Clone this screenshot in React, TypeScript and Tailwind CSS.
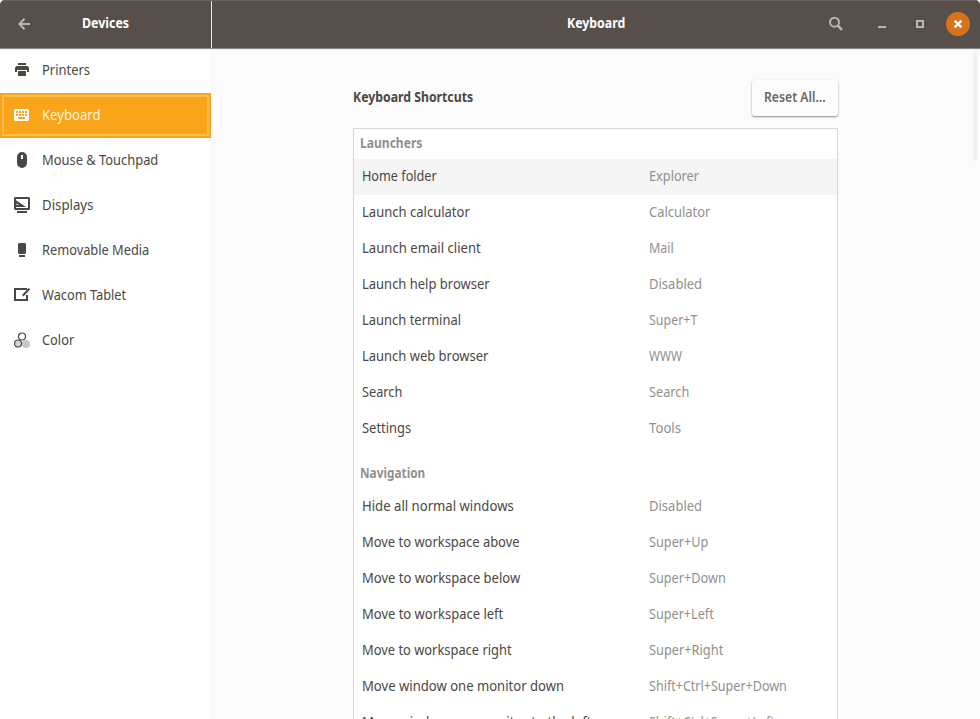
import { useLayoutEffect, useRef, useState, type ReactNode } from "react";

/** Inline label condensed horizontally so that it occupies the given advance width. */
function Label({ children, width, className = "" }: { children: ReactNode; width: number; className?: string }) {
  const ref = useRef<HTMLSpanElement>(null);
  const [scale, setScale] = useState(1);
  useLayoutEffect(() => {
    if (ref.current) setScale(width / ref.current.offsetWidth);
  }, [width]);
  return (
    <span className={`block shrink-0 whitespace-nowrap ${className}`} style={{ width }}>
      <span ref={ref} className="inline-block origin-left" style={{ transform: `scaleX(${scale})` }}>
        {children}
      </span>
    </span>
  );
}

const PrinterIcon = () => (
  <svg width="16" height="16" viewBox="0 0 16 16" fill="currentColor">
    <path d="M4 1h8v2H4zM2.500 4h11L15 5.500V10h-2V8H3v2H1V5.500zM4 9h8v5H4z" />
  </svg>
);
const KeyboardIcon = () => (
  <svg width="16" height="16" viewBox="0 0 16 16" fill="currentColor">
    <path fillRule="evenodd" d="M1 2h13l1 1v10l-1 1H1l-1-1V3zM2 4v2h2V4zM5 4v2h2V4zM8 4v2h2V4zM11 4v2h2V4zM2 7v2h2V7zM5 7v2h2V7zM8 7v2h2V7zM11 7v2h2V7zM4 10v2h7v-2z" />
  </svg>
);
const MouseIcon = () => (
  <svg width="16" height="16" viewBox="0 0 16 16" fill="currentColor">
    <path fillRule="evenodd" d="M8 0a5 5 0 0 1 5 5v6a5 5 0 0 1-10 0V5a5 5 0 0 1 5-5zM7 3v4h2V3z" />
  </svg>
);
const DisplayIcon = () => (
  <svg width="16" height="16" viewBox="0 0 16 16" fill="currentColor">
    <path d="M0 1l1-1h14l1 1v11l-1 1H1l-1-1v-2h2v1h12V2H2v1.200L12 10H0z" />
    <path d="M2.500 6.500v1.500H5z" fill="#fff" />
    <path d="M3 14h10v2H3z" />
  </svg>
);
const MediaIcon = () => (
  <svg width="16" height="16" viewBox="0 0 16 16" fill="currentColor">
    <path d="M5 1h6l1 1v9l-1 1H5l-1-1V2zM5 13h6v2H5z" />
  </svg>
);
const TabletIcon = () => (
  <svg width="16" height="16" viewBox="0 0 16 16" fill="none" stroke="currentColor" strokeWidth="2">
    <path d="M13 8v5H1V2h12" />
    <path d="M15.300 1.700L8.800 8.800" />
  </svg>
);
const ColorIcon = () => (
  <svg width="16" height="16" viewBox="0 0 16 16">
    <circle cx="12" cy="12" r="4" fill="#c8c7c5" />
    <circle cx="8" cy="4.500" r="3.500" fill="#fff" stroke="#4b4743" strokeWidth="1.200" />
    <circle cx="4" cy="11.500" r="3.500" fill="#d3d2d1" stroke="#4b4743" strokeWidth="1.200" />
  </svg>
);

const devices = [
  { name: "Printers", w: 48, Icon: PrinterIcon },
  { name: "Keyboard", w: 58, Icon: KeyboardIcon },
  { name: "Mouse & Touchpad", w: 116, Icon: MouseIcon },
  { name: "Displays", w: 51, Icon: DisplayIcon },
  { name: "Removable Media", w: 107, Icon: MediaIcon },
  { name: "Wacom Tablet", w: 84, Icon: TabletIcon },
  { name: "Color", w: 32, Icon: ColorIcon },
];

type Row = [string, number, string, number];
const launchers: Row[] = [
  ["Home folder", 75, "Explorer", 50],
  ["Launch calculator", 108, "Calculator", 61],
  ["Launch email client", 119, "Mail", 25],
  ["Launch help browser", 128, "Disabled", 53],
  ["Launch terminal", 99, "Super+T", 48],
  ["Launch web browser", 126, "WWW", 33],
  ["Search", 40, "Search", 40],
  ["Settings", 49, "Tools", 32],
];
const navigation: Row[] = [
  ["Hide all normal windows", 152, "Disabled", 53],
  ["Move to workspace above", 158, "Super+Up", 59],
  ["Move to workspace below", 158, "Super+Down", 77],
  ["Move to workspace left", 141, "Super+Left", 65],
  ["Move to workspace right", 150, "Super+Right", 74],
  ["Move window one monitor down", 202, "Shift+Ctrl+Super+Down", 138],
  ["Move window one monitor to the left", 229, "Shift+Ctrl+Super+Left", 126],
];

function Section({ title, width, rows, selected }: { title: string; width: number; rows: Row[]; selected?: number }) {
  return (
    <section>
      <h3 className="flex h-[30px] items-center pb-[2px] pl-[6px] font-bold text-[#92908e]">
        <Label width={width}>{title}</Label>
      </h3>
      {rows.map(([name, nw, key, kw], i) => (
        <div key={name} className={`flex h-9 items-center pl-2 pb-[3px] ${i === selected ? "bg-[#f5f5f5]" : ""}`}>
          <div className="w-[287px]">
            <Label width={nw}>{name}</Label>
          </div>
          <Label width={kw} className="text-[#92908e]">{key}</Label>
        </div>
      ))}
    </section>
  );
}

export default function App() {
  return (
    <div className="h-[719px] w-[980px] overflow-hidden bg-white font-['Noto_Sans','Open_Sans',sans-serif] text-sm font-stretch-condensed text-[#4b4743]">
      <div className="flex h-full flex-col overflow-hidden rounded-t-[5px] bg-[#fbfbfb]">
        <header className="relative z-10 flex h-12 shrink-0 border-t border-[#67605b] bg-[#574f4a] font-bold text-white shadow-[0_1px_1px_rgba(0,0,0,0.45)]">
          <div className="flex w-[211px] items-center pb-px">
            <svg className="ml-4 mr-[50px]" width="16" height="16" viewBox="0 0 16 16" fill="none" stroke="#b9b5b3" strokeWidth="2">
              <path d="M14 8H4M8.500 2.800L3.300 8l5.200 5.200" />
            </svg>
            <Label width={47} className="pb-[2px]">Devices</Label>
          </div>
          <div className="w-px bg-[#e9e8e7]" />
          <div className="flex flex-1 items-center pb-px pl-[355px]">
            <Label width={58} className="pb-[2px]">Keyboard</Label>
            <svg className="ml-[203px]" width="16" height="16" viewBox="0 0 16 16" fill="none" stroke="#b9b5b3" strokeWidth="2">
              <circle cx="6.500" cy="6.200" r="4.500" />
              <path d="M9.700 9.500l4.300 4.300" strokeWidth="2.500" />
            </svg>
            <div className="ml-[34px] mt-[6px] h-[2px] w-2 bg-[#b9b5b3]" />
            <div className="ml-[30px] size-2 border-2 border-[#b9b5b3]" />
            <div className="ml-[22px] flex size-6 items-center justify-center rounded-full bg-[#d7721d]">
              <svg width="8" height="8" viewBox="0 0 8 8" stroke="#fff" strokeWidth="2.300">
                <path d="M.6.6l6.800 6.800M7.400.6L.6 7.400" />
              </svg>
            </div>
          </div>
        </header>
        <div className="flex min-h-0 flex-1">
          <nav className="w-[211px] shrink-0 bg-white">
            {devices.map(({ name, w, Icon }) => (
              <div
                key={name}
                className={`flex h-[45px] items-center pb-px pl-[14px] ${name === "Keyboard" ? "bg-[#faa41a] text-[#fff3df] outline-2 -outline-offset-4 outline-[#fcba53]" : ""}`}
              >
                <span className={`mr-3 ${name === "Keyboard" ? "text-white" : ""}`}>
                  <Icon />
                </span>
                <Label width={w} className="pb-px">{name}</Label>
              </div>
            ))}
          </nav>
          <main className="flex min-w-0 flex-1 overflow-hidden pl-[142px]">
            <div className="w-[485px] shrink-0 pt-8">
              <div className="mb-3 flex h-9 items-center justify-between">
                <h2 className="pb-[2px] font-bold">
                  <Label width={120}>Keyboard Shortcuts</Label>
                </h2>
                <button className="flex h-9 w-[86px] items-center justify-center rounded-[3px] bg-[#fcfcfc] pb-[2px] font-semibold text-[#6c6865] shadow-[0_1px_2px_rgba(0,0,0,0.45)]">
                  <Label width={62}>Reset All…</Label>
                </button>
              </div>
              <div className="flex h-[700px] flex-col gap-3 border border-[#d8d8d8] bg-white">
                <Section title="Launchers" width={62} rows={launchers} selected={0} />
                <Section title="Navigation" width={65} rows={navigation} />
              </div>
            </div>
            <div className="ml-auto mr-[3px] mt-[3px] h-[110px] w-1 rounded-full bg-[#f0f0f0]" />
          </main>
        </div>
      </div>
    </div>
  );
}
